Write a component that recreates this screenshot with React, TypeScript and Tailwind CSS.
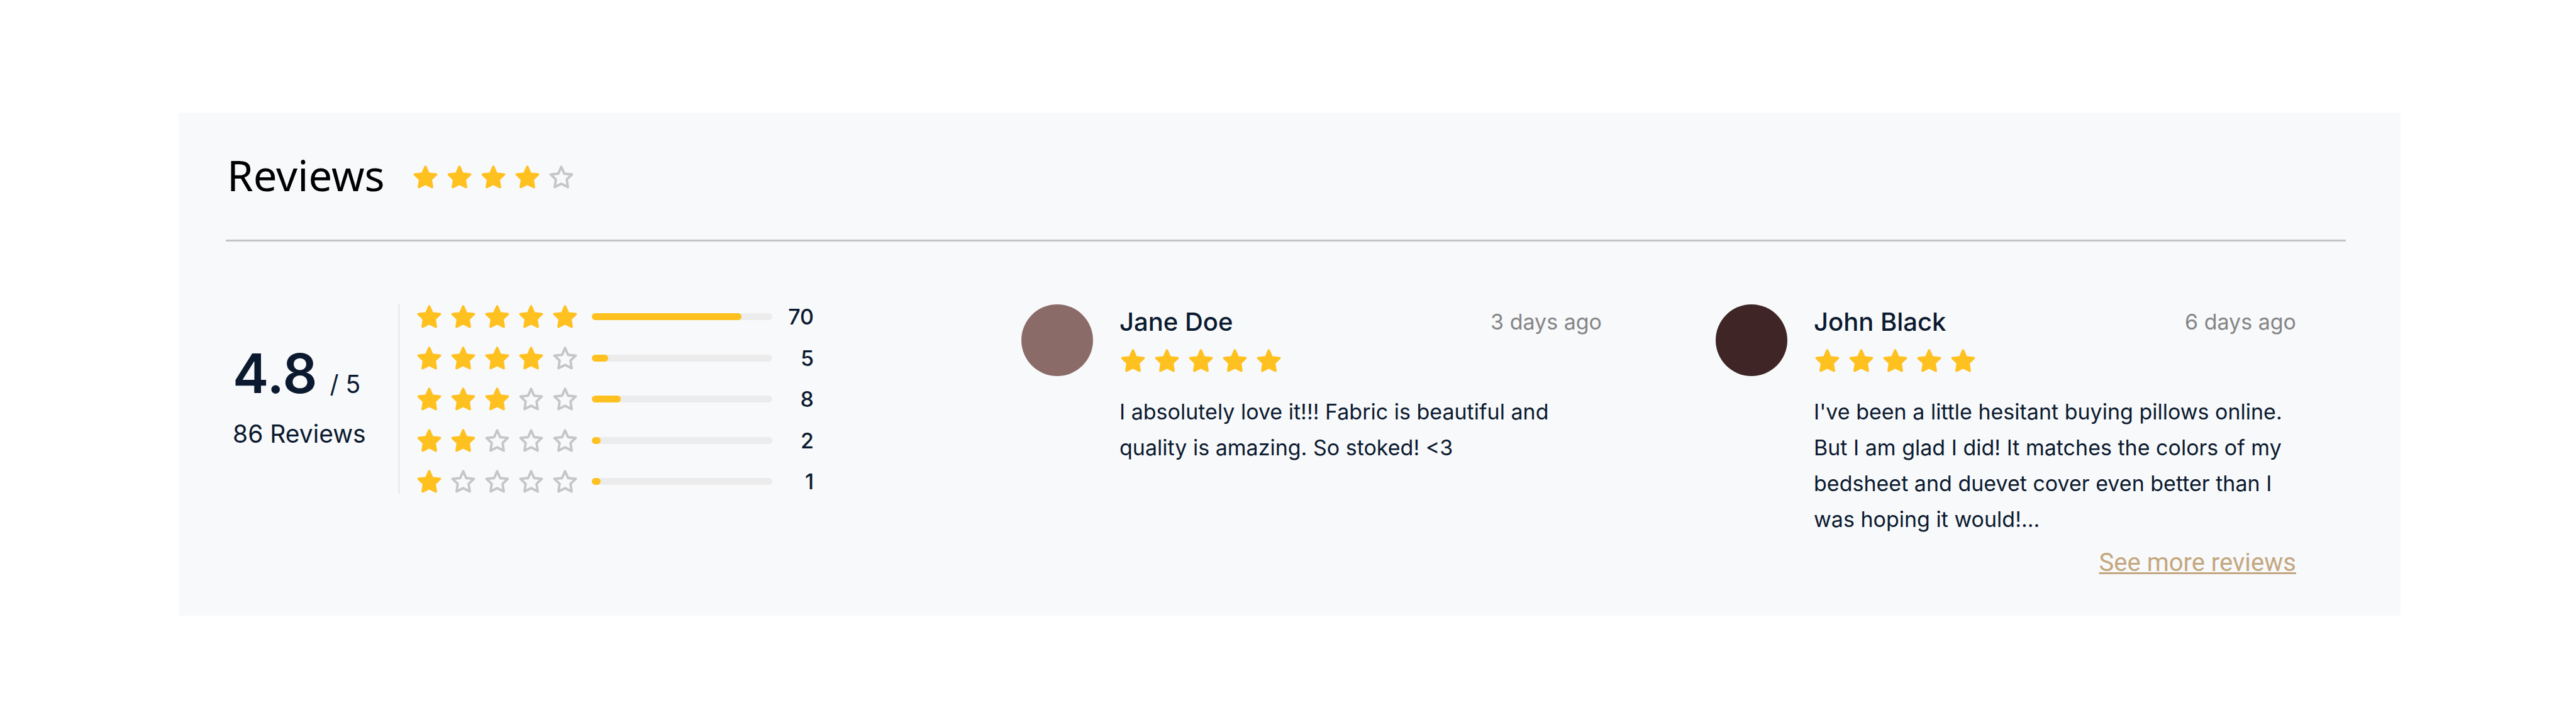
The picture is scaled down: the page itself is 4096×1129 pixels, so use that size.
const distribution = [
  { stars: 5, count: 70, percent: 83 },
  { stars: 4, count: 5, percent: 9 },
  { stars: 3, count: 8, percent: 16 },
  { stars: 2, count: 2, percent: 5 },
  { stars: 1, count: 1, percent: 5 },
];

const reviews = [
  {
    name: "Jane Doe",
    date: "3 days ago",
    avatar: "bg-[#8a6b68]",
    text: "I absolutely love it!!! Fabric is beautiful and quality is amazing. So stoked! <3",
    more: false,
  },
  {
    name: "John Black",
    date: "6 days ago",
    avatar: "bg-[#3f2525]",
    text: "I've been a little hesitant buying pillows online. But I am glad I did! It matches the colors of my bedsheet and duevet cover even better than I was hoping it would!...",
    more: true,
  },
];

function Star({ filled }: { filled: boolean }) {
  return (
    <svg
      viewBox="0 0 180 180"
      aria-hidden="true"
      className={
        filled
          ? "size-[43px] shrink-0 fill-[#ffc120] stroke-[#ffc120]"
          : "size-[43px] shrink-0 fill-none stroke-[#c6c6c6]"
      }
      strokeWidth="16"
      strokeLinejoin="round"
    >
      <path d="M90 22 110 68 161 73 126 106 134 157 90 135 46 157 54 106 19 73 70 68Z" />
    </svg>
  );
}

function Stars({ value }: { value: number }) {
  return (
    <div role="img" aria-label={`${value} out of 5 stars`} className="flex shrink-0 items-center gap-[11px]">
      {[1, 2, 3, 4, 5].map((n) => (
        <Star key={n} filled={n <= value} />
      ))}
    </div>
  );
}

function Summary() {
  return (
    <div className="flex items-stretch self-start">
      <div className="flex w-[274px] shrink-0 flex-col justify-center gap-[18px] pb-2 pl-[11px]">
        <p className="flex items-baseline gap-5 whitespace-nowrap">
          <span className="text-[86px] leading-[100px] font-semibold">4.8</span>
          <span className="text-[39px] leading-[56px]">/ 5</span>
        </p>
        <p className="text-[39px] leading-[56px] whitespace-nowrap">86 Reviews</p>
      </div>
      <ul className="flex min-h-[301px] flex-col justify-between border-l-3 border-[#ececec] pl-[25px]">
        {distribution.map((row) => (
          <li key={row.stars} className="flex h-[39px] items-center">
            <Stars value={row.stars} />
            <div className="ml-[21px] h-[11px] w-[287px] overflow-hidden rounded-full bg-[#ececec]">
              <div className="h-full rounded-full bg-[#ffc120]" style={{ width: `${row.percent}%` }} />
            </div>
            <span className="w-[66px] text-right text-[34px] font-medium">{row.count}</span>
          </li>
        ))}
      </ul>
    </div>
  );
}

function Review({ review }: { review: (typeof reviews)[number] }) {
  return (
    <article className="flex gap-[42px]">
      <div className={`size-[114px] shrink-0 rounded-full ${review.avatar}`} />
      <div className="flex min-w-0 flex-1 flex-col">
        <div className="flex items-center justify-between leading-[56px] whitespace-nowrap">
          <h2 className="text-[40px] font-medium">{review.name}</h2>
          <time className="text-[34px] text-[#858585]">{review.date}</time>
        </div>
        <div className="mt-3">
          <Stars value={5} />
        </div>
        <p className="mt-[31px] text-[34px] leading-[57px]">{review.text}</p>
        {review.more && (
          <a
            href="#reviews"
            className="mt-[13px] self-end font-['Roboto',sans-serif] text-[40px] leading-[56px] text-[#c3a77f] underline decoration-3"
          >
            See more reviews
          </a>
        )}
      </div>
    </article>
  );
}

export default function App() {
  return (
    <main className="bg-white pt-[179px] pr-[279px] pb-[150px] pl-[284px] font-['Inter',sans-serif] text-[#0b1a2f]">
      <section id="reviews" className="bg-[#f8f9fb] pt-[57px] pr-[87px] pb-14 pl-[75px]">
        <header className="flex items-center gap-[43px] border-b-3 border-[#c4c4c4] pb-[54px]">
          <h1 className="pb-1.5 pl-[2px] font-['Noto_Sans',sans-serif] text-[67px] leading-[85px] text-black">
            Reviews
          </h1>
          <Stars value={4} />
        </header>
        <div className="mt-[100px] grid grid-cols-[1084fr_923fr_923fr] gap-x-[181px] pr-[79px]">
          <Summary />
          {reviews.map((review) => (
            <Review key={review.name} review={review} />
          ))}
        </div>
      </section>
    </main>
  );
}
